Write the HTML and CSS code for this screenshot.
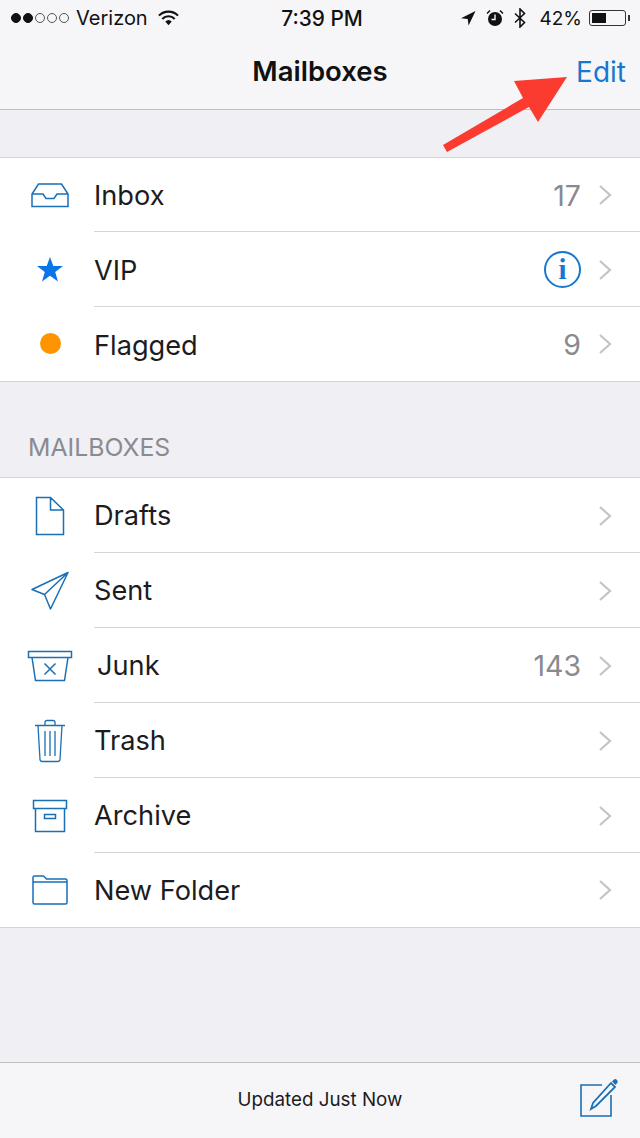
FILE: index.html
```html
<!DOCTYPE html>
<html lang="en">
<head>
    <meta charset="UTF-8">
    <meta name="viewport" content="width=device-width, initial-scale=1.0">
    <title>Mailboxes</title>
    <link rel="stylesheet" href="styles.css">
</head>
<body>
    <div class="app">
        <header class="top">
            <div class="status">
                <div class="status-left">
                    <span class="dots"><i class="on"></i><i class="on"></i><i></i><i></i><i></i></span>
                    <span>Verizon</span>
                    <svg class="wifi" width="21" height="16" viewBox="0 0 22 16"><path d="M1 5.500a14 14 0 0 1 20 0" fill="none" stroke="#111" stroke-width="2.200"/><path d="M4.500 9a9 9 0 0 1 13 0" fill="none" stroke="#111" stroke-width="2.200"/><path d="M7.600 11.600a5 5 0 0 1 6.800 0L11 15.500z" fill="#111"/></svg>
                </div>
                <div class="status-time">7:39 PM</div>
                <div class="status-right">
                    <svg width="16" height="16" viewBox="0 0 16 16"><path d="M15.500 1 1 8.300l6.700.6.900 6.600z" fill="#111"/></svg>
                    <svg class="alarm" width="18" height="18" viewBox="0 0 18 18"><circle cx="9" cy="10" r="7" fill="#111"/><path d="M9 5.500V10.500H5.500" fill="none" stroke="#f7f7fa" stroke-width="1.400"/><path d="M1 4.500 4 1.500M17 4.500 14 1.500" stroke="#111" stroke-width="1.500"/></svg>
                    <svg width="14" height="20" viewBox="0 0 14 20"><path d="M2 5.500 11.500 14.500 7 19V1l4.500 4.500L2 14.500" fill="none" stroke="#111" stroke-width="1.600"/></svg>
                    <span class="pct">42%</span>
                    <span class="battery"><span class="battery-fill"></span></span>
                    <span class="battery-tip"></span>
                </div>
            </div>
            <nav class="nav">
                <span></span>
                <div class="nav-title">Mailboxes</div>
                <a class="nav-edit">Edit</a>
            </nav>
        </header>

        <main class="main">
            <ul class="group group-first">
                <li class="row">
                    <span class="row-icon"><svg width="40" height="26" viewBox="0 0 40 26"><path d="M2 12 8.500 2H31.500L38 12V24.500H2zM2 12H13L16 16.500H24L27 12H38" fill="none" stroke="#1a6fb5" stroke-width="1.500"/></svg></span>
                    <span class="row-label">Inbox</span>
                    <span class="row-count">17</span>
                    <svg class="chev" width="14" height="22" viewBox="0 0 14 22"><path d="M2 2 12 11 2 20" fill="none" stroke="#c4c4c8" stroke-width="2.200"/></svg>
                </li>
                <li class="row">
                    <span class="row-icon"><svg width="28" height="27" viewBox="0 0 28 27"><path d="M14 1 17.300 10.100H27L19.200 16 22 25.500 14 19.800 6 25.500 8.800 16 1 10.100H10.700z" fill="#0a74e8"/></svg></span>
                    <span class="row-label">VIP</span>
                    <span class="row-info"><span class="info-i">i</span></span>
                    <svg class="chev" width="14" height="22" viewBox="0 0 14 22"><path d="M2 2 12 11 2 20" fill="none" stroke="#c4c4c8" stroke-width="2.200"/></svg>
                </li>
                <li class="row">
                    <span class="row-icon"><span class="flag-dot"></span></span>
                    <span class="row-label">Flagged</span>
                    <span class="row-count">9</span>
                    <svg class="chev" width="14" height="22" viewBox="0 0 14 22"><path d="M2 2 12 11 2 20" fill="none" stroke="#c4c4c8" stroke-width="2.200"/></svg>
                </li>
            </ul>

            <div class="section-title">MAILBOXES</div>

            <ul class="group">
                <li class="row">
                    <span class="row-icon"><svg width="30" height="40" viewBox="0 0 30 40"><path d="M1.500 1.500H15.500L28.500 14V38.500H1.500zM15.500 1.500V14H28.500" fill="none" stroke="#1a6fb5" stroke-width="1.500"/></svg></span>
                    <span class="row-label">Drafts</span>
                    <svg class="chev" width="14" height="22" viewBox="0 0 14 22"><path d="M2 2 12 11 2 20" fill="none" stroke="#c4c4c8" stroke-width="2.200"/></svg>
                </li>
                <li class="row">
                    <span class="row-icon"><svg width="40" height="40" viewBox="0 0 40 40"><path d="M38 1.500 2 18.500 14.500 23.500 20.500 38zM38 1.500 14.500 23.500" fill="none" stroke="#1a6fb5" stroke-width="1.500" stroke-linejoin="round"/></svg></span>
                    <span class="row-label">Sent</span>
                    <svg class="chev" width="14" height="22" viewBox="0 0 14 22"><path d="M2 2 12 11 2 20" fill="none" stroke="#c4c4c8" stroke-width="2.200"/></svg>
                </li>
                <li class="row">
                    <span class="row-icon"><svg width="46" height="32" viewBox="0 0 46 32"><path d="M1.500 1.500H44.500V7.500H1.500zM5 7.500 8.500 30.500H37.500L41 7.500M17.500 13.500 28.500 24.500M28.500 13.500 17.500 24.500" fill="none" stroke="#1a6fb5" stroke-width="1.500"/></svg></span>
                    <span class="row-label row-label-junk">Junk</span>
                    <span class="row-count">143</span>
                    <svg class="chev" width="14" height="22" viewBox="0 0 14 22"><path d="M2 2 12 11 2 20" fill="none" stroke="#c4c4c8" stroke-width="2.200"/></svg>
                </li>
                <li class="row">
                    <span class="row-icon"><svg width="32" height="44" viewBox="0 0 32 44"><path d="M1 6.500H31M11 6.500V3.500Q11 1.500 13 1.500H19Q21 1.500 21 3.500V6.500M4 6.500 6 40.500Q6.200 42.500 8.500 42.500H23.500Q25.800 42.500 26 40.500L28 6.500M11 12V37M16 12V37M21 12V37" fill="none" stroke="#1a6fb5" stroke-width="1.300"/></svg></span>
                    <span class="row-label">Trash</span>
                    <svg class="chev" width="14" height="22" viewBox="0 0 14 22"><path d="M2 2 12 11 2 20" fill="none" stroke="#c4c4c8" stroke-width="2.200"/></svg>
                </li>
                <li class="row">
                    <span class="row-icon"><svg width="36" height="34" viewBox="0 0 36 34"><path d="M1.500 1.500H34.500V9.500H1.500zM3.500 9.500V32.500H32.500V9.500M12.500 15.500H23.500V19.500H12.500z" fill="none" stroke="#1a6fb5" stroke-width="1.500"/></svg></span>
                    <span class="row-label">Archive</span>
                    <svg class="chev" width="14" height="22" viewBox="0 0 14 22"><path d="M2 2 12 11 2 20" fill="none" stroke="#c4c4c8" stroke-width="2.200"/></svg>
                </li>
                <li class="row">
                    <span class="row-icon"><svg width="36" height="30" viewBox="0 0 36 30"><path d="M1 7V2.500Q1 1 2.500 1H11.500L14.500 4H33.500Q35 4 35 5.500V27.500Q35 29 33.500 29H2.500Q1 29 1 27.500zH35" fill="none" stroke="#1a6fb5" stroke-width="1.500"/></svg></span>
                    <span class="row-label">New Folder</span>
                    <svg class="chev" width="14" height="22" viewBox="0 0 14 22"><path d="M2 2 12 11 2 20" fill="none" stroke="#c4c4c8" stroke-width="2.200"/></svg>
                </li>
            </ul>
        </main>

        <footer class="toolbar">
            <span></span>
            <div class="toolbar-text">Updated Just Now</div>
            <svg class="compose" width="40" height="40" viewBox="0 0 40 40"><path d="M32 17V38H2V7H23" fill="none" stroke="#1a6fb5" stroke-width="1.600"/><path d="M12 31 14 25 32 5 36 9 17 28z" fill="none" stroke="#1a6fb5" stroke-width="1.800"/><path d="M33 3.500 35 1.500Q36.500.500 38 2 39.300 3.500 38.300 5L36.500 7z" fill="#1a6fb5"/></svg>
        </footer>

        <!-- red annotation arrow on top of the screenshot -->
        <svg class="arrow" width="130" height="85" viewBox="0 0 130 85"><path d="M127 7 74 11 83 28 3 75 7 82 89 37 98 52z" fill="#fb3b30"/></svg>
    </div>
</body>
</html>
```

FILE: styles.css
```css
* { box-sizing: border-box; }
html, body { margin: 0; height: 100%; }
body { font-family: Inter, "Noto Sans", sans-serif; color: #111; background: #efeff4; }
ul { list-style: none; margin: 0; padding: 0; }

.app { position: relative; width: 640px; height: 1138px; display: flex; flex-direction: column; overflow: hidden; }

.top { height: 110px; background: #f6f6f9; border-bottom: 1px solid #bdbdc3; }
.status { height: 36px; padding: 0 10px 0 11px; display: grid; grid-template-columns: 1fr auto 1fr; align-items: center; font-size: 20px; }
.status-left { display: flex; align-items: center; gap: 7px; }
.status-time { font-weight: 500; font-size: 20.800px; padding-left: 3px; }
.status-right { display: flex; align-items: center; justify-content: flex-end; gap: 9px; }
.dots { display: flex; gap: 2px; }
.dots i { width: 10px; height: 10px; border-radius: 50%; border: 1px solid #555; }
.dots i.on { background: #111; border-color: #111; }
.wifi { margin-left: 3px; }
.pct { margin-left: 3px; font-size: 19px; }
.alarm { margin-left: 1px; margin-right: 0; }
.battery { width: 37px; height: 16px; border: 1px solid #333; border-radius: 3px; padding: 2px; margin-left: -2px; margin-right: -7px; }
.battery-fill { display: block; width: 14px; height: 100%; background: #111; }
.battery-tip { width: 2px; height: 6px; background: #333; }

.nav { height: 73px; display: grid; grid-template-columns: 1fr auto 1fr; align-items: center; }
.nav-title { font-size: 27.500px; font-weight: 600; padding-bottom: 3px; }
.nav-edit { justify-self: end; font-size: 28px; color: #1878cf; padding-bottom: 2px; margin-right: 14px; }

.main { flex: 1; }
.group { background: #fff; border-top: 1px solid #d4d4d8; border-bottom: 1px solid #d4d4d8; }
.group-first { margin-top: 47px; }
.group-first .row:first-child { height: 74px; }
.group-first .row + .row .row-label { padding-top: 2px; }
.row { height: 75px; display: flex; align-items: center; position: relative; padding-right: 28px; }
.row:last-child { height: 74px; }
.row + .row::before { content: ""; position: absolute; left: 94px; right: 0; top: -1px; height: 1px; background: #d6d6da; }
.row-icon { width: 94px; padding-left: 6px; display: flex; justify-content: center; align-items: center; flex: none; }
.row-label { flex: 1; font-size: 27.200px; color: #1c1c1e; }
.row-label-junk { padding-left: 3px; }
.row-count { font-size: 28.500px; color: #8a8a8e; margin-right: 17px; }
.row-info { width: 37px; height: 37px; border: 2px solid #1878cf; border-radius: 50%; display: flex; align-items: center; justify-content: center; margin-right: 17px; }
.info-i { font-family: "Liberation Serif", serif; font-weight: 700; font-size: 29px; color: #1878cf; line-height: 1; }
.flag-dot { width: 21px; height: 21px; border-radius: 50%; background: #fe9500; margin-bottom: 2px; }
.chev { flex: none; }

.section-title { height: 95px; padding: 0 28px 15px; display: flex; align-items: flex-end; font-size: 24.800px; color: #8a8a90; }

.toolbar { height: 76px; background: #f6f6f9; border-top: 1px solid #bdbdc3; display: grid; grid-template-columns: 1fr auto 1fr; align-items: center; }
.toolbar-text { font-size: 18.800px; color: #1c1c1e; padding-bottom: 3px; }
.compose { justify-self: end; margin-right: 21px; margin-bottom: 5px; }

.arrow { position: absolute; left: 440px; top: 70px; }
```
